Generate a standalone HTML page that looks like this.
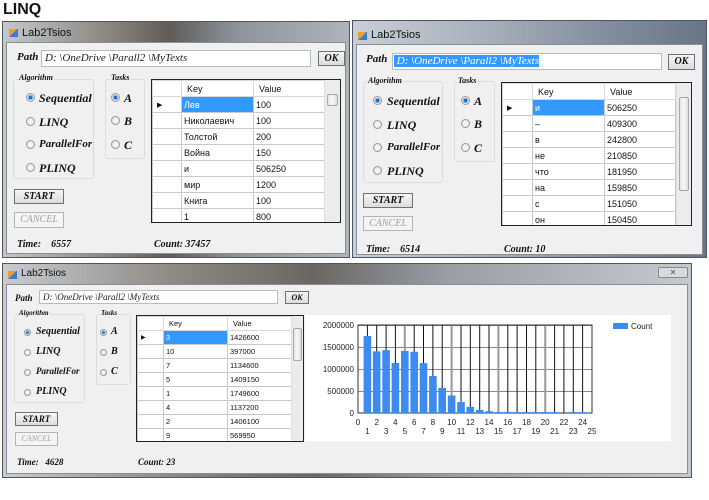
<!DOCTYPE html>
<html><head><meta charset="utf-8"><style>
*{margin:0;padding:0;box-sizing:border-box}
body{width:709px;height:500px;background:#fff;position:relative;overflow:hidden;font-family:"Liberation Sans",sans-serif}
.a{position:absolute}
.frame{position:absolute}
.client{position:absolute;background:#f0f0f0;border:1px solid #8a8f96}
.tt{position:absolute;font-size:11px;color:#111}
.ic{position:absolute;width:9px;height:8px;background:linear-gradient(135deg,#e8a030 50%,#3a7bd5 50%)}
.lb{position:absolute;font-family:"Liberation Serif",serif;font-weight:bold;font-style:italic;color:#111;white-space:nowrap}
.tb{position:absolute;background:#fff;border:1px solid #b5bcc7;font-family:"Liberation Serif",serif;font-style:italic;color:#222;white-space:nowrap;overflow:hidden;padding-left:3px}
.btn{position:absolute;border:1px solid #707070;background:linear-gradient(#f6f6f6,#dcdcdc);font-family:"Liberation Serif",serif;font-weight:bold;font-style:italic;text-align:center;color:#111}
.btn.dis{border-color:#b5b5b5;background:#f4f4f4;color:#a0a0a0;font-weight:normal}
.gb{position:absolute;border:1px solid #dcdcdc;border-radius:3px}
.gt{position:absolute;background:#f0f0f0;font-family:"Liberation Serif",serif;font-weight:bold;font-style:italic;color:#111;padding:0 1px;white-space:nowrap}
.rb{position:absolute;border-radius:50%;border:1px solid #9a9a9a;background:radial-gradient(#fdfdfd,#dcdcdc)}
.rb.on{background:radial-gradient(#1e6fc8 30%,#8cc0ec 45%,#e8e8e8 60%)}
.grid{position:absolute;border:1px solid #222;background:#fff;overflow:hidden}
.grid table{border-collapse:collapse;font-family:"Liberation Sans",sans-serif;color:#111}
.grid td{border:1px solid #c8c8c8;padding-left:2px;white-space:nowrap;overflow:hidden}
.grid tr.h td{background:#fff;border-color:#d8d8d8}
.sel{background:#3399ff;color:#fff}
.sb{position:absolute;top:0;right:0;bottom:0;background:#ececec;border-left:1px solid #ddd}
.th{position:absolute;left:2px;right:2px;background:linear-gradient(90deg,#e6e6e6,#f8f8f8,#dcdcdc);border:1px solid #a8a8a8;border-radius:2px}
</style></head><body>

<div class="lb" style="left:3px;top:1px;font-family:'Liberation Sans',sans-serif;font-style:normal;font-size:16px">LINQ</div>

<!-- Window 1 -->
<div class="frame" style="left:2px;top:21px;width:348px;height:237px;background:linear-gradient(90deg,#c4c7cb,#8b8782 30%,#5f5c5a 48%,#8f949b 68%,#aeb4bc);border:1px solid #555"></div>
<div class="ic" style="left:9px;top:29px"></div>
<div class="tt" style="left:22px;top:27px">Lab2Tsios</div>
<div class="client" style="left:6px;top:42px;width:340px;height:212px"></div>
<div class="lb" style="left:17px;top:51px;font-size:11px">Path</div>
<div class="tb" style="left:41px;top:50px;width:270px;height:17px;font-size:11px;line-height:15px">D: \OneDrive \Parall2 \MyTexts</div>
<div class="btn" style="left:318px;top:51px;width:27px;height:15px;font-size:10px;line-height:13px">OK</div>
<div class="gb" style="left:13px;top:79px;width:81px;height:100px"></div>
<div class="gt" style="left:18px;top:73px;font-size:8px">Algorithm</div>
<div class="rb on" style="left:26px;top:93px;width:9px;height:9px"></div>
<div class="lb" style="left:39px;top:91px;font-size:12px">Sequential</div>
<div class="rb" style="left:26px;top:117px;width:9px;height:9px"></div>
<div class="lb" style="left:39px;top:115px;font-size:12px">LINQ</div>
<div class="rb" style="left:26px;top:140px;width:9px;height:9px"></div>
<div class="lb" style="left:39px;top:138px;font-size:11px">ParallelFor</div>
<div class="rb" style="left:26px;top:163px;width:9px;height:9px"></div>
<div class="lb" style="left:39px;top:161px;font-size:12px">PLINQ</div>
<div class="gb" style="left:105px;top:79px;width:40px;height:80px"></div>
<div class="gt" style="left:110px;top:73px;font-size:8px">Tasks</div>
<div class="rb on" style="left:111px;top:93px;width:9px;height:9px"></div>
<div class="lb" style="left:124px;top:91px;font-size:12px">A</div>
<div class="rb" style="left:111px;top:116px;width:9px;height:9px"></div>
<div class="lb" style="left:124px;top:114px;font-size:12px">B</div>
<div class="rb" style="left:111px;top:140px;width:9px;height:9px"></div>
<div class="lb" style="left:124px;top:138px;font-size:12px">C</div>
<div class="grid" style="left:151px;top:79px;width:190px;height:144px">
<table style="font-size:9px"><colgroup><col style="width:29px"><col style="width:72px"><col style="width:71px"></colgroup>
<tr class="h" style="height:16px"><td></td><td style="padding-left:5px">Key</td><td style="padding-left:5px">Value</td></tr>
<tr style="height:16px"><td style="font-size:7px;padding-left:4px">&#9654;</td><td class="sel">Лев</td><td>100</td></tr>
<tr style="height:16px"><td></td><td>Николаевич</td><td>100</td></tr>
<tr style="height:16px"><td></td><td>Толстой</td><td>200</td></tr>
<tr style="height:16px"><td></td><td>Война</td><td>150</td></tr>
<tr style="height:16px"><td></td><td>и</td><td>506250</td></tr>
<tr style="height:16px"><td></td><td>мир</td><td>1200</td></tr>
<tr style="height:16px"><td></td><td>Книга</td><td>100</td></tr>
<tr style="height:16px"><td></td><td>1</td><td>800</td></tr>
</table>
<div class="sb" style="width:16px"><div class="th" style="top:14px;height:12px"></div></div>
</div>
<div class="btn" style="left:14px;top:189px;width:50px;height:15px;font-size:10px;line-height:13px">START</div>
<div class="btn dis" style="left:14px;top:212px;width:50px;height:16px;font-size:10px;line-height:14px">CANCEL</div>
<div class="lb" style="left:17px;top:239px;font-size:10px">Time:&nbsp;&nbsp;&nbsp; 6557</div>
<div class="lb" style="left:154px;top:239px;font-size:10px">Count: 37457</div>

<!-- Window 2 -->
<div class="frame" style="left:352px;top:20px;width:355px;height:238px;background:linear-gradient(90deg,#c9ced6,#a6adb8 40%,#7f8a9b 75%,#6a7686);border:1px solid #4a5565"></div>
<div class="ic" style="left:358px;top:32px"></div>
<div class="tt" style="left:371px;top:29px">Lab2Tsios</div>
<div class="client" style="left:356px;top:44px;width:347px;height:211px"></div>
<div class="lb" style="left:366px;top:53px;font-size:11px">Path</div>
<div class="tb" style="left:392px;top:53px;width:270px;height:17px;font-size:11px;line-height:15px;padding-left:1px"><span style="background:#3399ff;color:#fff">&nbsp;D: \OneDrive \Parall2 \MyTexts</span></div>
<div class="btn" style="left:668px;top:54px;width:27px;height:16px;font-size:10px;line-height:14px">OK</div>
<div class="gb" style="left:363px;top:81px;width:80px;height:102px"></div>
<div class="gt" style="left:367px;top:76px;font-size:8px">Algorithm</div>
<div class="rb on" style="left:373px;top:96px;width:9px;height:9px"></div>
<div class="lb" style="left:387px;top:94px;font-size:12px">Sequential</div>
<div class="rb" style="left:373px;top:120px;width:9px;height:9px"></div>
<div class="lb" style="left:387px;top:118px;font-size:12px">LINQ</div>
<div class="rb" style="left:373px;top:143px;width:9px;height:9px"></div>
<div class="lb" style="left:387px;top:141px;font-size:11px">ParallelFor</div>
<div class="rb" style="left:373px;top:166px;width:9px;height:9px"></div>
<div class="lb" style="left:387px;top:164px;font-size:12px">PLINQ</div>
<div class="gb" style="left:454px;top:81px;width:41px;height:81px"></div>
<div class="gt" style="left:457px;top:76px;font-size:8px">Tasks</div>
<div class="rb on" style="left:461px;top:96px;width:9px;height:9px"></div>
<div class="lb" style="left:474px;top:94px;font-size:12px">A</div>
<div class="rb" style="left:461px;top:119px;width:9px;height:9px"></div>
<div class="lb" style="left:474px;top:117px;font-size:12px">B</div>
<div class="rb" style="left:461px;top:143px;width:9px;height:9px"></div>
<div class="lb" style="left:474px;top:141px;font-size:12px">C</div>
<div class="grid" style="left:501px;top:82px;width:191px;height:144px">
<table style="font-size:9px"><colgroup><col style="width:30px"><col style="width:72px"><col style="width:71px"></colgroup>
<tr class="h" style="height:16px"><td></td><td style="padding-left:5px">Key</td><td style="padding-left:5px">Value</td></tr>
<tr style="height:16px"><td style="font-size:7px;padding-left:4px">&#9654;</td><td class="sel">и</td><td>506250</td></tr>
<tr style="height:16px"><td></td><td>–</td><td>409300</td></tr>
<tr style="height:16px"><td></td><td>в</td><td>242800</td></tr>
<tr style="height:16px"><td></td><td>не</td><td>210850</td></tr>
<tr style="height:16px"><td></td><td>что</td><td>181950</td></tr>
<tr style="height:16px"><td></td><td>на</td><td>159850</td></tr>
<tr style="height:16px"><td></td><td>с</td><td>151050</td></tr>
<tr style="height:16px"><td></td><td>он</td><td>150450</td></tr>
</table>
<div class="sb" style="width:15px"><div class="th" style="top:14px;height:94px"></div></div>
</div>
<div class="btn" style="left:363px;top:193px;width:50px;height:15px;font-size:10px;line-height:13px">START</div>
<div class="btn dis" style="left:363px;top:216px;width:50px;height:15px;font-size:10px;line-height:13px">CANCEL</div>
<div class="lb" style="left:366px;top:244px;font-size:10px">Time:&nbsp;&nbsp;&nbsp; 6514</div>
<div class="lb" style="left:504px;top:244px;font-size:10px">Count: 10</div>

<!-- Window 3 -->
<div class="frame" style="left:2px;top:263px;width:690px;height:215px;background:linear-gradient(90deg,#c8cbcf,#8d8985 25%,#6a6663 45%,#9a9fa6 65%,#c5cad1);border:1px solid #555"></div>
<div class="a" style="left:658px;top:267px;width:30px;height:11px;border:1px solid #8a8a8a;border-radius:2px;background:#d8dade;font-size:8px;text-align:center;line-height:9px;color:#555">&#10005;</div>
<div class="ic" style="left:8px;top:271px"></div>
<div class="tt" style="left:21px;top:268px;font-size:10px">Lab2Tsios</div>
<div class="client" style="left:6px;top:284px;width:682px;height:190px"></div>
<div class="lb" style="left:15px;top:293px;font-size:9px">Path</div>
<div class="tb" style="left:39px;top:290px;width:239px;height:14px;font-size:9px;line-height:12px">D: \OneDrive \Parall2 \MyTexts</div>
<div class="btn" style="left:285px;top:291px;width:24px;height:13px;font-size:8px;line-height:11px">OK</div>
<div class="gb" style="left:14px;top:314px;width:71px;height:89px"></div>
<div class="gt" style="left:18px;top:309px;font-size:7px">Algorithm</div>
<div class="rb on" style="left:24px;top:329px;width:7px;height:7px"></div>
<div class="lb" style="left:36px;top:326px;font-size:10px">Sequential</div>
<div class="rb" style="left:24px;top:349px;width:7px;height:7px"></div>
<div class="lb" style="left:36px;top:346px;font-size:10px">LINQ</div>
<div class="rb" style="left:24px;top:369px;width:7px;height:7px"></div>
<div class="lb" style="left:36px;top:366px;font-size:9px">ParallelFor</div>
<div class="rb" style="left:24px;top:389px;width:7px;height:7px"></div>
<div class="lb" style="left:36px;top:386px;font-size:10px">PLINQ</div>
<div class="gb" style="left:96px;top:314px;width:35px;height:71px"></div>
<div class="gt" style="left:100px;top:309px;font-size:7px">Tasks</div>
<div class="rb on" style="left:100px;top:329px;width:7px;height:7px"></div>
<div class="lb" style="left:111px;top:326px;font-size:10px">A</div>
<div class="rb" style="left:100px;top:349px;width:7px;height:7px"></div>
<div class="lb" style="left:111px;top:346px;font-size:10px">B</div>
<div class="rb" style="left:100px;top:369px;width:7px;height:7px"></div>
<div class="lb" style="left:111px;top:366px;font-size:10px">C</div>
<div class="grid" style="left:136px;top:315px;width:168px;height:127px">
<table style="font-size:7.5px"><colgroup><col style="width:26px"><col style="width:64px"><col style="width:65px"></colgroup>
<tr class="h" style="height:14px"><td></td><td style="padding-left:5px">Key</td><td style="padding-left:5px">Value</td></tr>
<tr style="height:14px"><td style="font-size:6px;padding-left:3px">&#9654;</td><td class="sel">3</td><td>1426600</td></tr>
<tr style="height:14px"><td></td><td>10</td><td>397000</td></tr>
<tr style="height:14px"><td></td><td>7</td><td>1134600</td></tr>
<tr style="height:14px"><td></td><td>5</td><td>1409150</td></tr>
<tr style="height:14px"><td></td><td>1</td><td>1749600</td></tr>
<tr style="height:14px"><td></td><td>4</td><td>1137200</td></tr>
<tr style="height:14px"><td></td><td>2</td><td>1406100</td></tr>
<tr style="height:14px"><td></td><td>9</td><td>569950</td></tr>
</table>
<div class="sb" style="width:12px"><div class="th" style="left:1px;right:1px;top:12px;height:33px"></div></div>
</div>
<svg class="a" style="left:305px;top:315px" width="366" height="126" viewBox="0 0 366 126" font-family="Liberation Sans, sans-serif" font-size="8" fill="#222">
<rect width="366" height="126" fill="#fff"/>
<g stroke="#888" stroke-width="1">
<line x1="53" y1="10.5" x2="287" y2="10.5"/><line x1="53" y1="32.5" x2="287" y2="32.5"/><line x1="53" y1="54.5" x2="287" y2="54.5"/><line x1="53" y1="76.5" x2="287" y2="76.5"/>
</g>
<g stroke="#111" stroke-width="1">
<line x1="62.4" y1="10" x2="62.4" y2="98"/><line x1="71.7" y1="10" x2="71.7" y2="98"/><line x1="81.1" y1="10" x2="81.1" y2="98"/><line x1="90.4" y1="10" x2="90.4" y2="98"/><line x1="99.8" y1="10" x2="99.8" y2="98"/><line x1="109.2" y1="10" x2="109.2" y2="98"/><line x1="118.5" y1="10" x2="118.5" y2="98"/><line x1="127.9" y1="10" x2="127.9" y2="98"/><line x1="137.2" y1="10" x2="137.2" y2="98"/><line x1="146.6" y1="10" x2="146.6" y2="98"/><line x1="156" y1="10" x2="156" y2="98"/><line x1="165.3" y1="10" x2="165.3" y2="98"/><line x1="174.7" y1="10" x2="174.7" y2="98"/><line x1="184" y1="10" x2="184" y2="98"/><line x1="193.4" y1="10" x2="193.4" y2="98"/><line x1="202.8" y1="10" x2="202.8" y2="98"/><line x1="212.1" y1="10" x2="212.1" y2="98"/><line x1="221.5" y1="10" x2="221.5" y2="98"/><line x1="230.8" y1="10" x2="230.8" y2="98"/><line x1="240.2" y1="10" x2="240.2" y2="98"/><line x1="249.6" y1="10" x2="249.6" y2="98"/><line x1="258.9" y1="10" x2="258.9" y2="98"/><line x1="268.3" y1="10" x2="268.3" y2="98"/><line x1="277.6" y1="10" x2="277.6" y2="98"/>
</g>
<g stroke="#999" stroke-width="2"><line x1="99.8" y1="10" x2="99.8" y2="98"/><line x1="146.6" y1="10" x2="146.6" y2="98"/><line x1="193.4" y1="10" x2="193.4" y2="98"/><line x1="240.2" y1="10" x2="240.2" y2="98"/></g>
<rect x="53" y="10" width="234" height="88" fill="none" stroke="#333"/>
<g fill="#3d8bef">
<rect x="58.6" y="21" width="7.6" height="77"/><rect x="67.9" y="36.4" width="7.6" height="61.6"/><rect x="77.3" y="35.1" width="7.6" height="62.9"/><rect x="86.6" y="48" width="7.6" height="50"/><rect x="96" y="36" width="7.6" height="62"/><rect x="105.4" y="36.8" width="7.6" height="61.2"/><rect x="114.7" y="48.1" width="7.6" height="49.9"/><rect x="124.1" y="61" width="7.6" height="37"/><rect x="133.4" y="72.9" width="7.6" height="25.1"/><rect x="142.8" y="80.5" width="7.6" height="17.5"/><rect x="152.2" y="87" width="7.6" height="11"/><rect x="161.5" y="91.8" width="7.6" height="6.2"/><rect x="170.9" y="94.9" width="7.6" height="3.1"/><rect x="180.2" y="96.2" width="7.6" height="1.8"/><rect x="189.6" y="97" width="7.6" height="1"/><rect x="199" y="97" width="7.6" height="1"/><rect x="208.3" y="97" width="7.6" height="1"/><rect x="217.7" y="97" width="7.6" height="1"/><rect x="227" y="97" width="7.6" height="1"/><rect x="236.4" y="97" width="7.6" height="1"/><rect x="245.8" y="97" width="7.6" height="1"/><rect x="264.5" y="97" width="7.6" height="1"/><rect x="273.8" y="97" width="7.6" height="1"/>
</g>
<g text-anchor="end"><text x="49" y="13">2000000</text><text x="49" y="35">1500000</text><text x="49" y="57">1000000</text><text x="49" y="79">500000</text><text x="49" y="101">0</text></g>
<g text-anchor="middle">
<text x="53" y="110">0</text><text x="71.7" y="110">2</text><text x="90.4" y="110">4</text><text x="109.2" y="110">6</text><text x="127.9" y="110">8</text><text x="146.6" y="110">10</text><text x="165.3" y="110">12</text><text x="184" y="110">14</text><text x="202.8" y="110">16</text><text x="221.5" y="110">18</text><text x="240.2" y="110">20</text><text x="258.9" y="110">22</text><text x="277.6" y="110">24</text>
<text x="62.4" y="119">1</text><text x="81.1" y="119">3</text><text x="99.8" y="119">5</text><text x="118.5" y="119">7</text><text x="137.2" y="119">9</text><text x="156" y="119">11</text><text x="174.7" y="119">13</text><text x="193.4" y="119">15</text><text x="212.1" y="119">17</text><text x="230.8" y="119">19</text><text x="249.6" y="119">21</text><text x="268.3" y="119">23</text><text x="287" y="119">25</text>
</g>
<rect x="308" y="8" width="15" height="6" fill="#3d8bef"/><text x="326" y="14">Count</text>
</svg>
<div class="btn" style="left:15px;top:412px;width:43px;height:14px;font-size:9px;line-height:12px">START</div>
<div class="btn dis" style="left:15px;top:432px;width:43px;height:14px;font-size:8px;line-height:12px">CANCEL</div>
<div class="lb" style="left:17px;top:457px;font-size:9px">Time:&nbsp;&nbsp; 4628</div>
<div class="lb" style="left:138px;top:457px;font-size:9px">Count: 23</div>
</body></html>
